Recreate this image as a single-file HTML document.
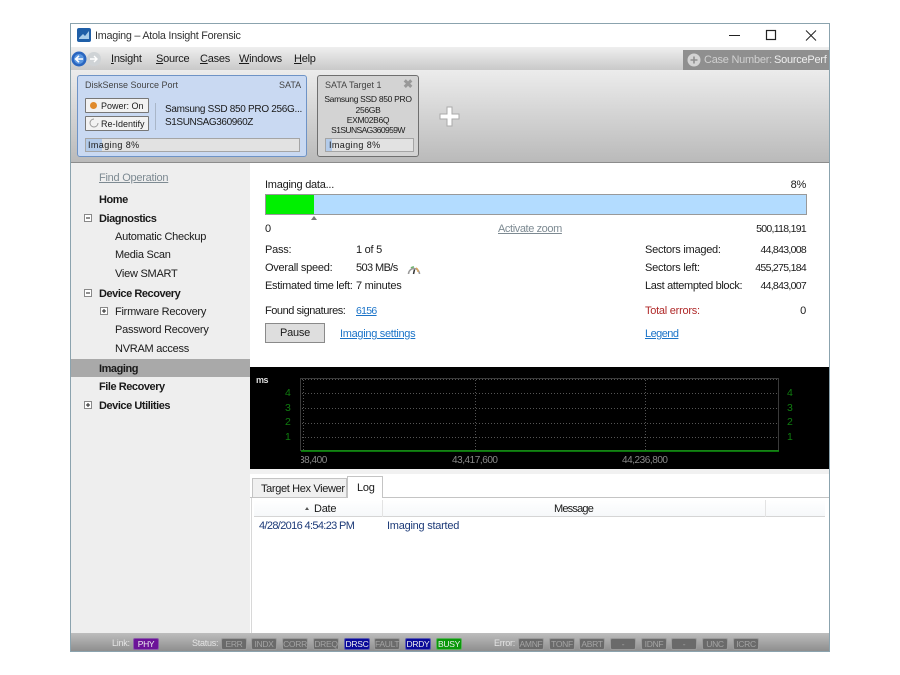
<!DOCTYPE html>
<html><head><meta charset="utf-8"><title>Imaging – Atola Insight Forensic</title>
<style>
html,body{margin:0;padding:0;background:#fff;width:900px;height:675px;overflow:hidden}
body{position:relative;font-family:"Liberation Sans",sans-serif;font-size:11px;letter-spacing:-.25px;color:#1a1a1a}
.a{position:absolute;box-sizing:border-box}
.t{position:absolute;white-space:nowrap;line-height:14px;height:14px}
.b{font-weight:bold;letter-spacing:-.45px}
.r{text-align:right}
.n{font-size:10.5px;letter-spacing:-.7px}
.u{text-decoration:underline}
.link{color:#1a73c8;text-decoration:underline}
.g{color:#7d8a92;text-decoration:underline}
.bdg{position:absolute;top:638px;height:10px;line-height:10px;font-size:8.5px;letter-spacing:-.3px;text-align:center;background:#6a6a6a;color:#a4a4a4;border:1px solid #9a9a9a;box-sizing:content-box;border-radius:2px;width:24px}
.lab{position:absolute;top:637px;line-height:12px;font-size:9px;color:#e4e4e4}
.gn{color:#0f7d0f;font-size:10.5px}
.ax{color:#8a8a8a;font-size:10px;letter-spacing:-.45px}
.c{font-size:8.5px;letter-spacing:-.3px;width:100px;text-align:center;left:318px}
</style></head><body>
<div class="a" style="left:70px;top:23px;width:760px;height:629px;border:1px solid #8ba3ae;background:#fff"></div>
<!-- title -->
<svg class="a" style="left:77px;top:28px" width="14" height="14" viewBox="0 0 14 14"><rect width="14" height="14" rx="2" fill="#1f5fa8"/><path d="M2 10 L6 6 L8 8 L12 3 L12 11 L2 11Z" fill="#a9cdea"/></svg>
<div class="t" style="left:95px;top:29px;font-size:10.8px;color:#333">Imaging – Atola Insight Forensic</div>
<svg class="a" style="left:725px;top:28px" width="100" height="14" viewBox="0 0 100 14"><path d="M4 7.500H15" stroke="#222" stroke-width="1"/><rect x="41.500" y="2.500" width="9" height="9" fill="none" stroke="#222" stroke-width="1.2"/><path d="M81 2.500L91 12.500M91 2.500L81 12.500" stroke="#222" stroke-width="1"/></svg>
<!-- menu -->
<div class="a" style="left:71px;top:47px;width:758px;height:23px;background:linear-gradient(#efefef,#c9c9c9)"></div>
<svg class="a" style="left:71px;top:50px" width="32" height="18" viewBox="0 0 32 18"><circle cx="23" cy="9" r="7" fill="#cfd3d6"/><circle cx="8" cy="9" r="7.500" fill="#2a66c0"/><circle cx="8" cy="9" r="5" fill="#5b97e0"/><path d="M12 9H5M8 5.800L4.600 9L8 12.200" stroke="#fff" stroke-width="1.600" fill="none"/><path d="M19 9H26M23 6L26 9L23 12" stroke="#fff" stroke-width="1.400" fill="none"/></svg>
<div class="t" style="left:111px;top:52px"><span class="u">I</span>nsight</div>
<div class="t" style="left:156px;top:52px"><span class="u">S</span>ource</div>
<div class="t" style="left:200px;top:52px"><span class="u">C</span>ases</div>
<div class="t" style="left:239px;top:52px"><span class="u">W</span>indows</div>
<div class="t" style="left:294px;top:52px"><span class="u">H</span>elp</div>
<div class="a" style="left:683px;top:50px;width:146px;height:20px;background:#8f8f8f"></div>
<svg class="a" style="left:687px;top:53px" width="14" height="14" viewBox="0 0 14 14"><circle cx="7" cy="7" r="6.500" fill="#d4d4d4"/><path d="M7 3.500V10.500M3.500 7H10.500" stroke="#8f8f8f" stroke-width="1.600"/></svg>
<div class="t" style="left:704px;top:53px;color:#d0d0d0">Case Number:</div>
<div class="t" style="left:774px;top:53px;color:#eee">SourcePerf</div>
<!-- device strip -->
<div class="a" style="left:71px;top:70px;width:758px;height:92px;background:linear-gradient(#ececec,#bababa)"></div>
<div class="a" style="left:71px;top:162px;width:758px;height:1px;background:#8c8c8c"></div>
<div class="a" style="left:77px;top:75px;width:230px;height:82px;background:#c9d9f2;border:1px solid #6e93c6;border-radius:3px"></div>
<div class="t" style="left:85px;top:78px;font-size:9px;color:#444;letter-spacing:0">DiskSense Source Port</div>
<div class="t" style="left:279px;top:78px;font-size:9px;color:#444;letter-spacing:0">SATA</div>
<div class="a" style="left:85px;top:98px;width:64px;height:15px;background:#f2f2f2;border:1px solid #777;border-radius:1px"></div>
<div class="a" style="left:90px;top:102px;width:7px;height:7px;border-radius:50%;background:#e08a2c"></div>
<div class="t" style="left:101px;top:99px;font-size:9px;letter-spacing:0">Power: On</div>
<div class="a" style="left:85px;top:116px;width:64px;height:15px;background:#f2f2f2;border:1px solid #777;border-radius:1px"></div>
<svg class="a" style="left:89px;top:118px" width="10" height="10" viewBox="0 0 10 10"><path d="M5 1A4 4 0 1 0 9 5" stroke="#999" fill="none"/></svg>
<div class="t" style="left:101px;top:117px;font-size:9px;letter-spacing:0">Re-Identify</div>
<div class="a" style="left:155px;top:103px;width:1px;height:27px;background:#a9b6c8"></div>
<div class="t" style="left:165px;top:103px;font-size:10px;letter-spacing:-.3px">Samsung SSD 850 PRO 256G...</div>
<div class="t" style="left:165px;top:116px;font-size:10px;letter-spacing:-.4px">S1SUNSAG360960Z</div>
<div class="a" style="left:85px;top:138px;width:215px;height:14px;background:#e2e2e2;border:1px solid #a5a5a5"></div>
<div class="a" style="left:86px;top:139px;width:16px;height:12px;background:#b3cbea"></div>
<div class="t" style="left:88px;top:138px;font-size:9px;letter-spacing:.4px">Imaging 8%</div>

<div class="a" style="left:317px;top:75px;width:102px;height:82px;background:#d3d3d3;border:1px solid #6f6f6f;border-radius:3px"></div>
<div class="t" style="left:325px;top:78px;font-size:9px;color:#444;letter-spacing:0">SATA Target 1</div>
<div class="t b" style="left:403px;top:77px;font-size:12px;color:#999">✖</div>
<div class="t c" style="top:92px">Samsung SSD 850 PRO</div>
<div class="t c" style="top:103px">256GB</div>
<div class="t c" style="top:113px">EXM02B6Q</div>
<div class="t c" style="top:123px;letter-spacing:-.6px">S1SUNSAG360959W</div>
<div class="a" style="left:325px;top:138px;width:89px;height:14px;background:#e2e2e2;border:1px solid #a5a5a5"></div>
<div class="a" style="left:326px;top:139px;width:6px;height:12px;background:#b3cbea"></div>
<div class="t" style="left:329px;top:138px;font-size:9px;letter-spacing:.4px">Imaging 8%</div>
<svg class="a" style="left:439px;top:106px" width="21" height="21" viewBox="0 0 21 21"><path d="M8 1H13V8H20V13H13V20H8V13H1V8H8Z" fill="#fff" stroke="#aaa"/></svg>
<!-- sidebar -->
<div class="a" style="left:71px;top:163px;width:179px;height:470px;background:#eeeeee"></div>
<div class="t g" style="left:99px;top:171px">Find Operation</div>
<div class="t b" style="left:99px;top:193px">Home</div>
<div class="t b" style="left:99px;top:212px">Diagnostics</div>
<div class="t" style="left:115px;top:230px">Automatic Checkup</div>
<div class="t" style="left:115px;top:248px">Media Scan</div>
<div class="t" style="left:115px;top:267px">View SMART</div>
<div class="t b" style="left:99px;top:287px">Device Recovery</div>
<div class="t" style="left:115px;top:305px">Firmware Recovery</div>
<div class="t" style="left:115px;top:323px">Password Recovery</div>
<div class="t" style="left:115px;top:342px">NVRAM access</div>
<div class="a" style="left:71px;top:359px;width:179px;height:18px;background:#a9a9a9"></div>
<div class="t b" style="left:99px;top:362px">Imaging</div>
<div class="t b" style="left:99px;top:380px">File Recovery</div>
<div class="t b" style="left:99px;top:399px">Device Utilities</div>
<svg class="a" style="left:84px;top:214px" width="8" height="8" viewBox="0 0 8 8"><rect x=".5" y=".5" width="7" height="7" fill="#fff" stroke="#888"/><path d="M2 4H6" stroke="#222"/></svg>
<svg class="a" style="left:84px;top:289px" width="8" height="8" viewBox="0 0 8 8"><rect x=".5" y=".5" width="7" height="7" fill="#fff" stroke="#888"/><path d="M2 4H6" stroke="#222"/></svg>
<svg class="a" style="left:100px;top:307px" width="8" height="8" viewBox="0 0 8 8"><rect x=".5" y=".5" width="7" height="7" fill="#fff" stroke="#888"/><path d="M2 4H6M4 2V6" stroke="#222"/></svg>
<svg class="a" style="left:84px;top:401px" width="8" height="8" viewBox="0 0 8 8"><rect x=".5" y=".5" width="7" height="7" fill="#fff" stroke="#888"/><path d="M2 4H6M4 2V6" stroke="#222"/></svg>
<!-- content -->
<div class="t" style="left:265px;top:178px">Imaging data...</div>
<div class="t r" style="right:94px;top:178px">8%</div>
<div class="a" style="left:265px;top:194px;width:542px;height:21px;background:#b3dcff;border:1px solid #999"></div>
<div class="a" style="left:266px;top:195px;width:48px;height:19px;background:#00f000"></div>
<div class="a" style="left:311px;top:216px;width:0;height:0;border-left:3.500px solid transparent;border-right:3.500px solid transparent;border-bottom:4px solid #777"></div>
<div class="t" style="left:265px;top:222px">0</div>
<div class="t g" style="left:498px;top:222px;letter-spacing:-.4px">Activate zoom</div>
<div class="t r n" style="right:94px;top:222px">500,118,191</div>
<div class="t" style="left:265px;top:243px">Pass:</div><div class="t" style="left:356px;top:243px">1 of 5</div>
<div class="t" style="left:265px;top:261px">Overall speed:</div><div class="t" style="left:356px;top:261px;letter-spacing:-.6px">503 MB/s</div>
<svg class="a" style="left:407px;top:264px" width="14" height="11" viewBox="0 0 14 11"><path d="M1.500 10A5.500 5.500 0 1 1 12.500 10" fill="none" stroke="#9a9a9a" stroke-width="1.500"/><path d="M4 4A4 4 0 0 1 7 3" fill="none" stroke="#6cb26c" stroke-width="1.500"/><path d="M9 4A4 4 0 0 1 11 8" fill="none" stroke="#d9a45a" stroke-width="1.500"/><path d="M6.500 10L7.500 5.500" stroke="#333" stroke-width="1.500"/></svg>
<div class="t" style="left:265px;top:279px;letter-spacing:-.3px">Estimated time left:</div><div class="t" style="left:356px;top:279px">7 minutes</div>
<div class="t" style="left:265px;top:304px;letter-spacing:-.45px">Found signatures:</div><div class="t link n" style="left:356px;top:304px">6156</div>
<div class="a" style="left:265px;top:323px;width:60px;height:20px;background:#dedede;border:1px solid #8a8a8a"></div>
<div class="t" style="left:265px;top:326px;width:60px;text-align:center">Pause</div>
<div class="t link" style="left:340px;top:327px;letter-spacing:-.3px">Imaging settings</div>
<div class="t" style="left:645px;top:243px">Sectors imaged:</div><div class="t r n" style="right:94px;top:243px">44,843,008</div>
<div class="t" style="left:645px;top:261px">Sectors left:</div><div class="t r n" style="right:94px;top:261px">455,275,184</div>
<div class="t" style="left:645px;top:279px;letter-spacing:-.35px">Last attempted block:</div><div class="t r n" style="right:94px;top:279px">44,843,007</div>
<div class="t" style="left:645px;top:304px;color:#b02a2a">Total errors:</div><div class="t r" style="right:94px;top:304px">0</div>
<div class="t link" style="left:645px;top:327px;letter-spacing:-.55px">Legend</div>
<!-- chart -->
<div class="a" style="left:250px;top:367px;width:579px;height:102px;background:#000"></div>
<svg class="a" style="left:250px;top:367px" width="579" height="102" viewBox="0 0 579 102">
<rect x="50.500" y="11.500" width="478" height="72" fill="none" stroke="#3a3a3a"/>
<g stroke="#555" stroke-dasharray="1 2"><path d="M52 12.500H528M52 26.500H528M52 41.500H528M52 56.500H528M52 70.500H528M53.500 13V83M225.500 13V83M395.500 13V83"/></g>
<path d="M51 84H529" stroke="#0c9a0c" stroke-width="1.600"/></svg>
<div class="t b" style="left:256px;top:373px;font-size:9px;color:#ddd">ms</div>
<div class="t gn" style="left:285px;top:386px">4</div><div class="t gn" style="left:285px;top:401px">3</div><div class="t gn" style="left:285px;top:415px">2</div><div class="t gn" style="left:285px;top:430px">1</div>
<div class="t gn" style="left:787px;top:386px">4</div><div class="t gn" style="left:787px;top:401px">3</div><div class="t gn" style="left:787px;top:415px">2</div><div class="t gn" style="left:787px;top:430px">1</div>
<div class="a" style="left:301px;top:454px;width:27px;height:14px;overflow:hidden"><div class="t ax" style="left:-2px;top:0">38,400</div></div>
<div class="t ax" style="left:452px;top:454px">43,417,600</div>
<div class="t ax" style="left:622px;top:454px">44,236,800</div>
<!-- tabs -->
<div class="a" style="left:250px;top:469px;width:579px;height:5px;background:#f1f1f1"></div>
<div class="a" style="left:250px;top:497px;width:579px;height:1px;background:#c4c4c4"></div>
<div class="a" style="left:252px;top:478px;width:95px;height:20px;background:#f0f0f0;border:1px solid #c4c4c4"></div>
<div class="t" style="left:261px;top:482px;letter-spacing:-.35px">Target Hex Viewer</div>
<div class="a" style="left:347px;top:476px;width:36px;height:22px;background:#fff;border:1px solid #c4c4c4;border-bottom:0"></div>
<div class="t" style="left:357px;top:481px">Log</div>
<div class="a" style="left:251px;top:498px;width:1px;height:135px;background:#d8d8d8"></div>
<div class="a" style="left:254px;top:500px;width:571px;height:17px;background:linear-gradient(#fff,#f6f8fa);border-bottom:1px solid #d5d5d5"></div>
<div class="a" style="left:382px;top:500px;width:1px;height:17px;background:#e3e3e3"></div>
<div class="a" style="left:765px;top:500px;width:1px;height:17px;background:#e3e3e3"></div>
<div class="a" style="left:305px;top:507px;width:0;height:0;border-left:2.500px solid transparent;border-right:2.500px solid transparent;border-bottom:3px solid #555"></div>
<div class="t" style="left:314px;top:502px">Date</div>
<div class="t" style="left:554px;top:502px;letter-spacing:-.8px">Message</div>
<div class="t" style="left:259px;top:519px;color:#1c3a78;letter-spacing:-.65px">4/28/2016 4:54:23 PM</div>
<div class="t" style="left:387px;top:519px;color:#1c3a78">Imaging started</div>
<!-- status bar -->
<div class="a" style="left:71px;top:633px;width:758px;height:18px;background:linear-gradient(#bdbdbd,#8e8e8e)"></div>
<div class="lab" style="left:112px">Link:</div>
<div class="bdg" style="left:133px;background:#6c1299;color:#eee;border-color:#8a5aa8">PHY</div>
<div class="lab" style="left:192px">Status:</div>
<div class="bdg" style="left:221px">ERR</div>
<div class="bdg" style="left:251px">INDX</div>
<div class="bdg" style="left:282px">CORR</div>
<div class="bdg" style="left:313px">DREQ</div>
<div class="bdg" style="left:344px;background:#0a0a9a;color:#eee;border-color:#5a5ab0">DRSC</div>
<div class="bdg" style="left:374px">FAULT</div>
<div class="bdg" style="left:405px;background:#0a0a9a;color:#eee;border-color:#5a5ab0">DRDY</div>
<div class="bdg" style="left:436px;background:#0a980a;color:#eee;border-color:#5ab05a">BUSY</div>
<div class="lab" style="left:494px">Error:</div>
<div class="bdg" style="left:518px">AMNF</div>
<div class="bdg" style="left:549px">TONF</div>
<div class="bdg" style="left:579px">ABRT</div>
<div class="bdg" style="left:610px">-</div>
<div class="bdg" style="left:641px">IDNF</div>
<div class="bdg" style="left:671px">-</div>
<div class="bdg" style="left:702px">UNC</div>
<div class="bdg" style="left:733px">ICRC</div>
</body></html>
